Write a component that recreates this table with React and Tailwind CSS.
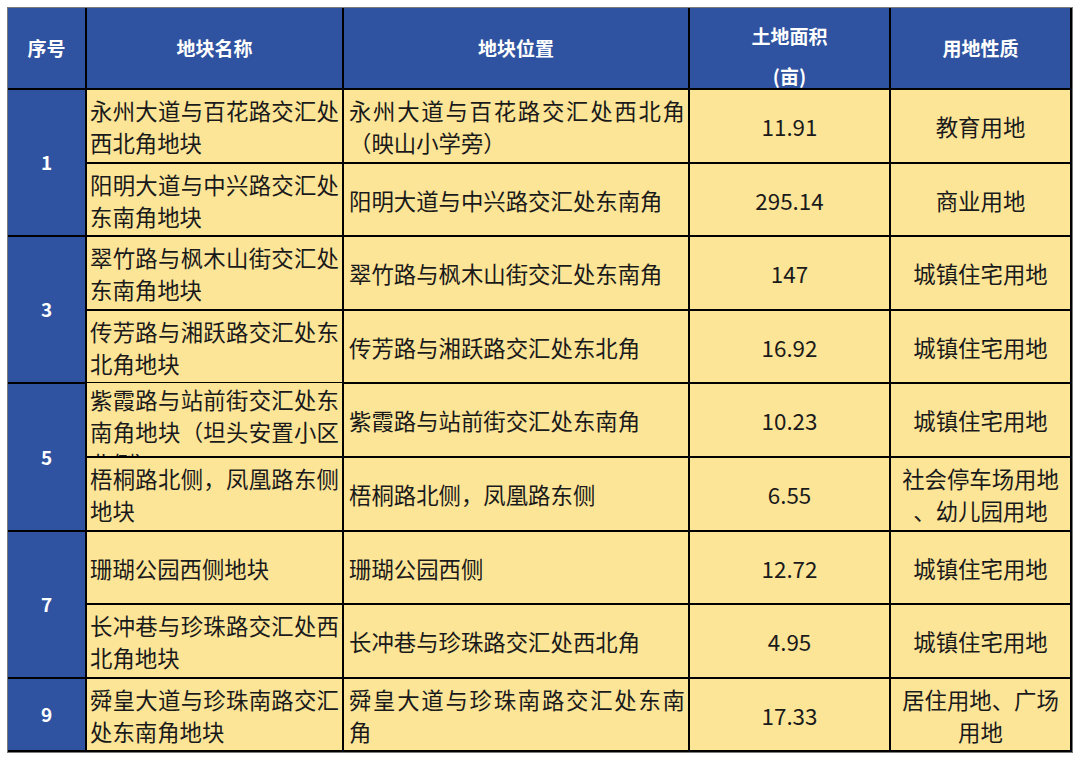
import React from 'react';

const rows = [
    {
        no: '1', span: true,
        name: ['永州大道与百花路交汇处', '西北角地块'],
        loc: ['永州大道与百花路交汇处西北角', '（映山小学旁）'],
        area: '11.91', use: ['教育用地'],
    },
    {
        name: ['阳明大道与中兴路交汇处', '东南角地块'],
        loc: ['阳明大道与中兴路交汇处东南角'],
        area: '295.14', use: ['商业用地'],
    },
    {
        no: '3', span: true,
        name: ['翠竹路与枫木山街交汇处', '东南角地块'],
        loc: ['翠竹路与枫木山街交汇处东南角'],
        area: '147', use: ['城镇住宅用地'],
    },
    {
        name: ['传芳路与湘跃路交汇处东', '北角地块'],
        loc: ['传芳路与湘跃路交汇处东北角'],
        area: '16.92', use: ['城镇住宅用地'],
    },
    {
        no: '5', span: true, clip: true,
        name: ['紫霞路与站前街交汇处东', '南角地块（坦头安置小区', '北侧）'],
        loc: ['紫霞路与站前街交汇处东南角'],
        area: '10.23', use: ['城镇住宅用地'],
    },
    {
        name: ['梧桐路北侧，凤凰路东侧', '地块'],
        loc: ['梧桐路北侧，凤凰路东侧'],
        area: '6.55', use: ['社会停车场用地', '、幼儿园用地'],
    },
    {
        no: '7', span: true,
        name: ['珊瑚公园西侧地块'],
        loc: ['珊瑚公园西侧'],
        area: '12.72', use: ['城镇住宅用地'],
    },
    {
        name: ['长冲巷与珍珠路交汇处西', '北角地块'],
        loc: ['长冲巷与珍珠路交汇处西北角'],
        area: '4.95', use: ['城镇住宅用地'],
    },
    {
        no: '9',
        name: ['舜皇大道与珍珠南路交汇', '处东南角地块'],
        loc: ['舜皇大道与珍珠南路交汇处东南', '角'],
        area: '17.33', use: ['居住用地、广场', '用地'],
    },
];

// wrapped lines are stretched to the cell width, like the sheet does
function Lines({ lines }) {
    return (
        <div className="w-full">
            {lines.map((line, i) => (
                <div
                    key={i}
                    className={i < lines.length - 1 ? 'whitespace-nowrap text-justify [text-align-last:justify]' : 'whitespace-nowrap'}
                >
                    {line}
                </div>
            ))}
        </div>
    );
}

function App() {
    const headCell = 'bg-[#2f53a0] text-white font-bold text-[19px] flex items-center justify-center';
    const bodyCell = 'bg-[#fde598] text-[#1a1a1a] text-[22.4px] leading-[32px] flex items-center overflow-hidden';

    return (
        <div className="w-[1080px] h-[760px] bg-white p-[7px]" style={{ fontFamily: '"Noto Sans CJK SC", "Noto Sans", sans-serif' }}>
            <div className="w-fit border border-[#7a7a7a]">
                <div className="grid grid-cols-[77px_255px_344px_199px_179px] grid-rows-[80px_72px_71px_72px_71px_72px_72px_71px_72px_71px] gap-[2px] bg-black pr-[2px] pb-[2px]">
                    {/* Header */}
                    <div className={headCell}>序号</div>
                    <div className={headCell}>地块名称</div>
                    <div className={headCell}>地块位置</div>
                    <div className="bg-[#2f53a0] text-white font-bold text-[19px] leading-[40px] flex flex-col items-center pt-[8px] overflow-hidden">
                        <div>土地面积</div>
                        <div>(亩)</div>
                    </div>
                    <div className={headCell}>用地性质</div>

                    {/* Body */}
                    {rows.map((r, i) => (
                        <React.Fragment key={i}>
                            {r.no && (
                                <div className={`bg-[#2f53a0] text-white font-bold text-[19px] flex items-center justify-center ${r.span ? 'row-span-2' : ''}`}>
                                    {r.no}
                                </div>
                            )}
                            <div className={`${bodyCell} px-[3px] ${r.clip ? 'items-start -mt-[1px]' : ''}`}>
                                <Lines lines={r.name} />
                            </div>
                            <div className={`${bodyCell} pl-[5px] pr-[3px]`}>
                                <Lines lines={r.loc} />
                            </div>
                            <div className={`${bodyCell} justify-center`}>
                                {r.area}
                            </div>
                            <div className={`${bodyCell} justify-center text-center`}>
                                <div>
                                    {r.use.map((u, j) => (
                                        <div key={j}>{u}</div>
                                    ))}
                                </div>
                            </div>
                        </React.Fragment>
                    ))}
                </div>
            </div>
        </div>
    );
}

export default App;
